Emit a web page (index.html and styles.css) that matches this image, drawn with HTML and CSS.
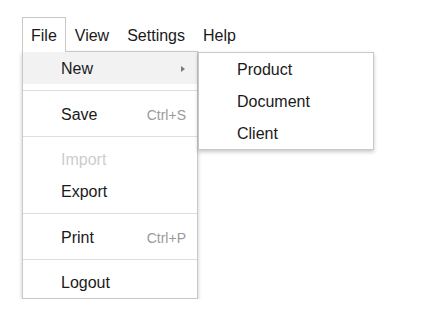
FILE: index.html
```html
<!DOCTYPE html>
<html>
<head>
<meta charset="utf-8">
<link rel="stylesheet" href="styles.css">
</head>
<body>
<nav class="menubar">
  <div class="top-item active">File</div>
  <div class="top-item">View</div>
  <div class="top-item">Settings</div>
  <div class="top-item">Help</div>
</nav>
<div class="menus">
  <div class="menu-panel main-menu">
    <div class="entry hover"><span>New</span><span class="arrow"></span></div>
    <div class="sep"></div>
    <div class="entry"><span>Save</span><span class="key">Ctrl+S</span></div>
    <div class="sep"></div>
    <div class="entry disabled"><span>Import</span></div>
    <div class="entry"><span>Export</span></div>
    <div class="sep"></div>
    <div class="entry"><span>Print</span><span class="key">Ctrl+P</span></div>
    <div class="sep"></div>
    <div class="entry"><span>Logout</span></div>
  </div>
  <div class="menu-panel sub-menu">
    <div class="entry"><span>Product</span></div>
    <div class="entry"><span>Document</span></div>
    <div class="entry"><span>Client</span></div>
  </div>
</div>
</body>
</html>
```

FILE: styles.css
```css
html, body {
  margin: 0;
  background: #fff;
}
body {
  padding: 17px 0 0 22px;
  font-family: "Liberation Sans", Arial, sans-serif;
  font-size: 16px;
  color: #1a1a1a;
}
.menubar {
  display: flex;
  align-items: flex-start;
  position: relative;
  z-index: 2;
}
.top-item {
  padding: 9px 8px 7px;
  line-height: 18px;
  border: 1px solid transparent;
  border-bottom: 0;
  cursor: default;
}
.top-item.active {
  border-color: #c8c8c8;
  background: #fff;
}
.menus {
  display: flex;
  align-items: flex-start;
  margin-top: -1px;
  position: relative;
  z-index: 1;
}
.menu-panel {
  width: 174px;
  background: #fff;
  border: 1px solid #c8c8c8;
  box-shadow: 0 2px 4px rgba(0, 0, 0, 0.22);
}
.sub-menu {
  margin-top: 1px;
}
.entry {
  display: flex;
  align-items: center;
  justify-content: space-between;
  height: 32px;
  box-sizing: border-box;
  padding: 2px 11px 0 38px;
  line-height: 18px;
}
.entry.hover {
  background: #f2f2f2;
}
.entry.disabled {
  color: #cdcdcd;
}
.key {
  font-size: 14px;
  color: #9a9a9a;
}
.arrow {
  width: 0;
  height: 0;
  border-left: 4px solid #7a7a7a;
  border-top: 3.5px solid transparent;
  border-bottom: 3.5px solid transparent;
  margin-right: 1px;
}
.sep {
  height: 1px;
  background: #dedede;
  margin: 6px 0 6.5px;
}
```
